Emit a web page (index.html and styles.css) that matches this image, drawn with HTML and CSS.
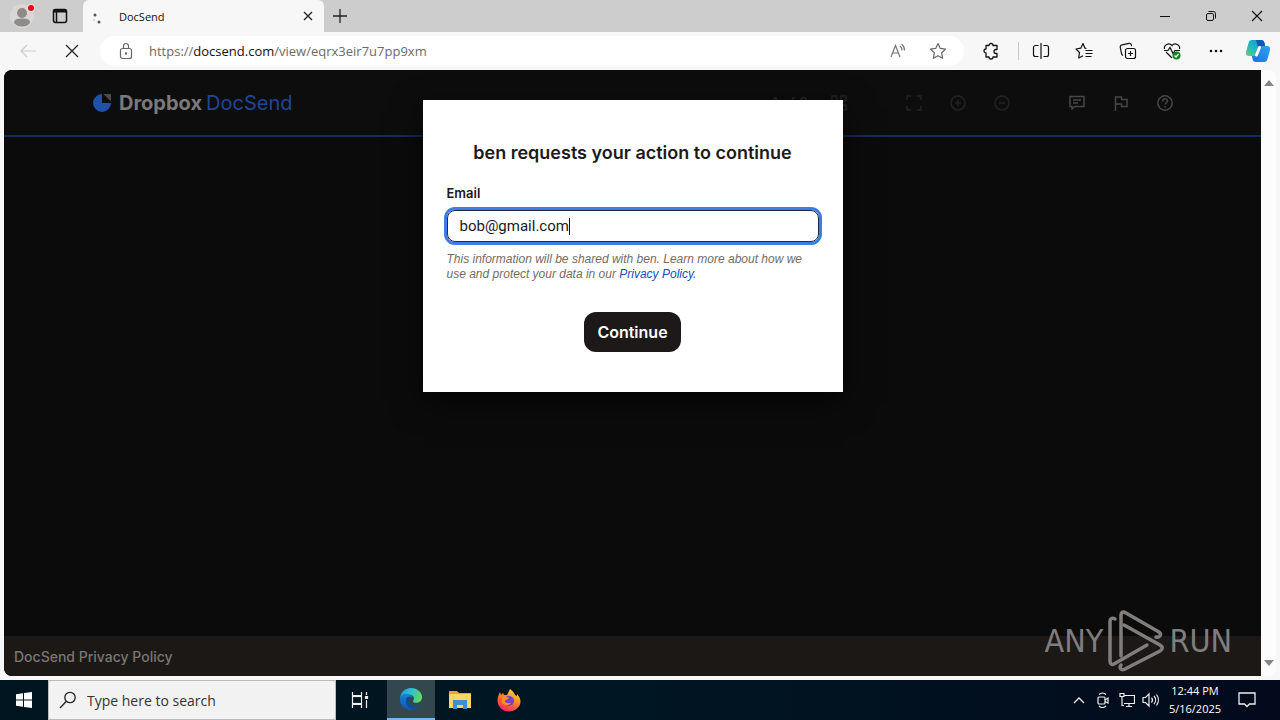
FILE: index.html
```html
<!DOCTYPE html>
<html lang="en">
<head>
    <meta charset="UTF-8">
    <meta name="viewport" content="width=device-width, initial-scale=1.0">
    <title>DocSend</title>
    <link rel="stylesheet" href="styles.css">
</head>
<body>

    <!-- Tab strip -->
    <div class="tabstrip">
        <button class="profile" aria-label="Profile">
            <svg width="32" height="32" viewBox="0 0 32 32"><circle cx="16" cy="16" r="12" fill="#d9d7d5"/><circle cx="16" cy="13" r="5" fill="#8f8b88"/><path d="M8 23c0-4 4-4.500 8-4.500s8 .5 8 4.500c-2 2.500-4.500 3.500-8 3.500S10 25.500 8 23z" fill="#8f8b88"/><circle cx="25" cy="8" r="4" fill="#f3dcdc"/><circle cx="25" cy="8" r="3" fill="#e00b1c"/></svg>
        </button>
        <button class="tab-menu" aria-label="Tab actions">
            <svg width="16" height="16" viewBox="0 0 16 16" fill="none" stroke="#111" stroke-width="1.500"><rect x="1.500" y="1.500" width="13" height="13" rx="2"/><path d="M1.500 3h13" stroke-width="3"/><path d="M4.500 3v11"/></svg>
        </button>
        <div class="tab">
            <svg width="16" height="16" viewBox="0 0 16 16" fill="#555"><circle cx="4" cy="7" r="1.500"/><circle cx="8" cy="14" r="1.500"/><circle cx="3" cy="12" r=".5"/></svg>
            <span class="tab-title">DocSend</span>
            <button aria-label="Close tab">
                <svg width="10" height="10" viewBox="0 0 10 10" stroke="#222" stroke-width="1.300"><path d="M1 1l8 8M9 1l-8 8"/></svg>
            </button>
        </div>
        <button class="new-tab" aria-label="New tab">
            <svg width="14" height="14" viewBox="0 0 14 14" stroke="#222" stroke-width="1.300"><path d="M7 0v14M0 7h14"/></svg>
        </button>
        <div class="window-buttons">
            <button aria-label="Minimize"><svg width="12" height="12" viewBox="0 0 12 12" stroke="#111"><path d="M1 6.500h10"/></svg></button>
            <button aria-label="Restore"><svg width="12" height="12" viewBox="0 0 12 12" fill="none" stroke="#111"><rect x="1.500" y="3.500" width="7" height="7" rx="1.500"/><path d="M3.500 1.500h5a2 2 0 0 1 2 2v5"/></svg></button>
            <button aria-label="Close"><svg width="12" height="12" viewBox="0 0 12 12" stroke="#111" stroke-width="1.200"><path d="M1 1l10 10M11 1L1 11"/></svg></button>
        </div>
    </div>

    <!-- Toolbar -->
    <div class="toolbar">
        <button class="nav" aria-label="Back"><svg width="18" height="18" viewBox="0 0 18 18" fill="none" stroke="#ccc" stroke-width="1.200"><path d="M17 9H2M8 3L2 9l6 6"/></svg></button>
        <button class="nav" aria-label="Stop"><svg width="14" height="14" viewBox="0 0 14 14" stroke="#222" stroke-width="1.200"><path d="M1 1l12 12M13 1L1 13"/></svg></button>
        <div class="address">
            <svg width="16" height="18" viewBox="0 0 16 18" fill="none" stroke="#666" stroke-width="1.200"><rect x="2.500" y="6.500" width="11" height="10" rx="2"/><path d="M5.500 6.500V4a2.500 2.500 0 0 1 5 0v2.500"/><circle cx="8" cy="11.500" r=".6" fill="#666"/></svg>
            <a class="url" href="#">https://<b>docsend.com</b>/view/eqrx3eir7u7pp9xm</a>
            <button aria-label="Read aloud"><svg width="18" height="18" viewBox="0 0 18 18" fill="none" stroke="#777" stroke-width="1.200"><path d="M2 15L6.500 3.500 11 15M3.500 11h6M11 4a6 6 0 0 1 2 4.500M12.500 2a8 8 0 0 1 3 6.500"/></svg></button>
            <button aria-label="Favorite"><svg width="18" height="18" viewBox="0 0 18 18" fill="none" stroke="#666" stroke-width="1.200" stroke-linejoin="round"><path d="M9 1.500l2.300 4.900 5.200.7-3.800 3.700.9 5.400L9 13.700l-4.600 2.500.9-5.400L1.500 7.100l5.200-.7z"/></svg></button>
        </div>
        <div class="tools">
            <button aria-label="Extensions"><svg width="18" height="18" viewBox="0 0 18 18" fill="none" stroke="#111" stroke-width="1.300" stroke-linejoin="round"><path d="M4 3.500h3a2 2 0 0 1 4 0h4v4h-1a1.800 1.800 0 0 0 0 4h1v3.500h-4a2 2 0 0 1-4 0H4v-4a2 2 0 0 1 0-4z"/></svg></button>
            <button class="split" aria-label="Split screen"><svg width="18" height="18" viewBox="0 0 18 18" fill="none" stroke="#111" stroke-width="1.200"><path d="M9 1v16M6.500 3.500H3.500a2 2 0 0 0-2 2v7a2 2 0 0 0 2 2h3M11.500 3.500h3a2 2 0 0 1 2 2v7a2 2 0 0 1-2 2h-3"/></svg></button>
            <button aria-label="Favorites"><svg width="18" height="18" viewBox="0 0 18 18" fill="none" stroke="#111" stroke-width="1.200" stroke-linejoin="round"><path d="M11.500 6.500L10 6.200 8 1.500 5.800 6.200 1 7l3.500 3.500-.8 5.500L8 13.800M10.500 8.500h7M10.500 11.500h7M10.500 14.500h6"/></svg></button>
            <button aria-label="Collections"><svg width="18" height="18" viewBox="0 0 18 18" fill="none" stroke="#111" stroke-width="1.200"><rect x="6.500" y="6.500" width="10" height="10" rx="2"/><path d="M11.500 9v5M9 11.500h5M4 13.500a3 3 0 0 1-1.500-2.200L1.200 5A2 2 0 0 1 3 2.800l7-1.500a2 2 0 0 1 2.300 1.500l.3 1.400"/></svg></button>
            <button aria-label="Browser essentials"><svg width="18" height="18" viewBox="0 0 18 18" fill="none" stroke="#111" stroke-width="1.200"><path d="M1.500 7C.5 3 6 0 9 3.500 12 0 17.500 3 16.500 7M3 10l6 6M1 8.500h4l2-3 3 6 2-3h5"/><circle cx="13.500" cy="13.500" r="4" fill="#168321" stroke="none"/><path d="M11.500 13.500l1.500 1.500 2.500-3" stroke="#fff"/></svg></button>
            <button aria-label="Settings"><svg width="18" height="18" viewBox="0 0 18 18" fill="#111"><circle cx="4" cy="9" r="1.300"/><circle cx="9" cy="9" r="1.300"/><circle cx="14" cy="9" r="1.300"/></svg></button>
            <button aria-label="Copilot">
                <svg width="26" height="24" viewBox="0 0 26 24">
                    <defs>
                        <linearGradient id="cpA" x1="0" y1="1" x2="1" y2="0"><stop offset="0" stop-color="#5fd27c"/><stop offset=".5" stop-color="#1db5c4"/><stop offset="1" stop-color="#1583d8"/></linearGradient>
                        <linearGradient id="cpB" x1="0" y1="1" x2="1" y2="0"><stop offset="0" stop-color="#1b6fe6"/><stop offset="1" stop-color="#2aa5f0"/></linearGradient>
                    </defs>
                    <path d="M7 1h9c2 0 3 1 3.500 3l.5 3h-3c-2 0-3 1-3.500 2.500L11.500 15c-.5 1.500-1.500 2-3 2H4c-2.500 0-3.500-1.500-3-4L3.500 4C4 2 5 1 7 1z" fill="url(#cpA)"/>
                    <path d="M19 23h-8c-2 0-3-1-3.500-3L7 17h2c2 0 3-1 3.500-2.500L14.500 9c.5-1.500 1.500-2 3-2H22c2.500 0 3.500 1.500 3 4l-2.500 9c-.5 2-1.500 3-3.500 3z" fill="url(#cpB)"/>
                    <path d="M11 1h5c2 0 3 1 3.500 3l.5 3h-3c-2 0-3 1-3.500 2.500z" fill="#1557b0"/>
                    <path d="M14.500 8.500l-3 7.500" stroke="#f7f7f7" stroke-width="3" stroke-linecap="round"/>
                </svg>
            </button>
        </div>
    </div>

    <!-- Page -->
    <div class="viewport">
        <div class="page">
            <header class="viewer-header">
                <a class="logo" href="#">
                    <svg width="18" height="20" viewBox="0 0 18 20"><path d="M9 1a9 9 0 1 0 9 9H9z" fill="#1f51ab"/><path d="M10.500 1H18v7.500z" fill="#4c4a48"/></svg>
                    <b>Dropbox</b> <span>DocSend</span>
                </a>
                <div class="viewer-tools">
                    <span class="page-count">1 of 8</span>
                    <button class="grid-button" aria-label="Thumbnails"><svg width="18" height="18" viewBox="0 0 18 18" fill="none" stroke="#232323" stroke-width="1.500"><rect x="2" y="2" width="5" height="5"/><rect x="11" y="2" width="5" height="5"/><rect x="2" y="11" width="5" height="5"/><rect x="11" y="11" width="5" height="5"/></svg></button>
                    <div class="tool-group">
                        <button aria-label="Full screen"><svg width="18" height="18" viewBox="0 0 18 18" fill="none" stroke="#232323" stroke-width="1.500"><path d="M2 6V2h4M12 2h4v4M16 12v4h-4M6 16H2v-4"/></svg></button>
                        <button aria-label="Zoom in"><svg width="18" height="18" viewBox="0 0 18 18" fill="none" stroke="#232323" stroke-width="1.500"><circle cx="9" cy="9" r="7"/><path d="M9 6v6M6 9h6"/></svg></button>
                        <button aria-label="Zoom out"><svg width="18" height="18" viewBox="0 0 18 18" fill="none" stroke="#232323" stroke-width="1.500"><circle cx="9" cy="9" r="7"/><path d="M6 9h6"/></svg></button>
                    </div>
                    <div class="tool-group">
                        <button aria-label="Comment"><svg width="18" height="18" viewBox="0 0 18 18" fill="none" stroke="#474747" stroke-width="1.500"><path d="M2 2.500h14v10H7L4 15v-2.500H2zM5 6h8M5 9h5"/></svg></button>
                        <button aria-label="Report"><svg width="18" height="18" viewBox="0 0 18 18" fill="none" stroke="#474747" stroke-width="1.500"><path d="M3.500 17V3h6v2.500H15v7H9.500V10h-6"/></svg></button>
                        <button aria-label="Help"><svg width="18" height="18" viewBox="0 0 18 18" fill="none" stroke="#474747" stroke-width="1.500"><circle cx="9" cy="9" r="7.200"/><path d="M6.500 7.500C6.500 4 11.500 4 11.500 7c0 1.800-2.500 1.800-2.500 3.500M9 12v1.500"/></svg></button>
                    </div>
                </div>
            </header>
            <main class="viewer-body"></main>
            <footer class="viewer-footer">
                <a href="#">DocSend Privacy Policy</a>
            </footer>

            <form class="modal">
                <h1>ben requests your action to continue</h1>
                <label for="email">Email</label>
                <div class="field">
                    <input type="text" id="email" value="bob@gmail.com">
                    <span class="caret"></span>
                </div>
                <p>This information will be shared with ben. Learn more about how we use and protect your data in our <a href="#">Privacy Policy.</a></p>
                <button type="button">Continue</button>
            </form>
        </div>
        <div class="scrollbar">
            <svg width="10" height="6" viewBox="0 0 10 6" fill="#858585"><path d="M5 0l5 6H0z"/></svg>
            <svg width="10" height="6" viewBox="0 0 10 6" fill="#858585"><path d="M0 0h10L5 6z"/></svg>
        </div>
        <div class="watermark">
            <span>ANY</span>
            <svg width="58" height="62" viewBox="0 0 58 62" fill="none" stroke="#807e7d" stroke-width="3.500" stroke-linejoin="round" stroke-linecap="round"><path d="M8 9C5 7 3 9 3 11v40c0 3 2 4 4 3l33-19"/><path d="M17 15l36 20c3 2 3 4 0 6L18 59c-4 2-6-1-4-4"/><path d="M49 27c4 1 6-3 3-5L19 3c-3-2-5-1-5 2v41"/></svg>
            <span>RUN</span>
        </div>
    </div>

    <!-- Taskbar -->
    <div class="taskbar">
        <button class="start" aria-label="Start"><svg width="16" height="16" viewBox="0 0 16 16" fill="#fff"><path d="M0 2.200L7 1.200v6.300H0zM8 1l8-1v7.500H8zM0 8.500h7v6.300l-7-1zM8 8.500h8V16l-8-1z"/></svg></button>
        <label class="search">
            <svg width="18" height="18" viewBox="0 0 18 18" fill="none" stroke="#222" stroke-width="1.300"><circle cx="11" cy="6.500" r="5.200"/><path d="M7.300 10.300L1 17"/></svg>
            <input type="text" placeholder="Type here to search" aria-label="Search">
        </label>
        <div class="apps">
            <button aria-label="Task view"><svg width="18" height="18" viewBox="0 0 18 18" fill="none" stroke="#eee" stroke-width="1.200"><path d="M1.500 1v3.500h9V1M1.500 17v-3.500h9V17"/><rect x="1.500" y="5.500" width="9" height="7"/><path d="M15.500 1v3M15.500 9v8"/><path d="M14.500 5.500h2v2h-2z" fill="#eee"/></svg></button>
            <button class="active" aria-label="Microsoft Edge">
                <svg width="24" height="24" viewBox="0 0 26 26">
                    <defs>
                        <linearGradient id="edA" x1="0" y1=".3" x2="1" y2=".5"><stop offset="0" stop-color="#1f9fe0"/><stop offset=".5" stop-color="#2ec3cf"/><stop offset="1" stop-color="#65d957"/></linearGradient>
                        <linearGradient id="edB" x1="0" y1="0" x2="0" y2="1"><stop offset="0" stop-color="#1683d0"/><stop offset="1" stop-color="#1155b4"/></linearGradient>
                    </defs>
                    <path d="M1 12C2 5 7 1 13 1c7 0 12 5 12 10 0 4-3 6-6.500 6-2.500 0-4-1-3-2.500 2-3-.5-6-4.500-6C6 8.500 2 10 1 12z" fill="url(#edA)"/>
                    <path d="M1 13c0-4 4-6 8-5.500 3 .3 5 2 5.500 3.500-4 0-5 3-4.500 5.500C10.500 20 14 22 18 21.500c2 0 4-1 5-2-2 3.500-6 5.500-10 5.500C6 25 1 20 1 13z" fill="url(#edB)"/>
                    <path d="M8 12c-2 5 1 11 7 12.500 4-.5 6.500-2.500 8-5-3 2-8 2-10.500-.5-3-3-2-7 1-8-2-1-4.500-.5-5.500 1z" fill="#154a93"/>
                </svg>
            </button>
            <button aria-label="File Explorer"><svg width="22" height="20" viewBox="0 0 22 20"><path d="M0 1h8l2 2h12v15H0z" fill="#e8a33a"/><path d="M0 4h22v14H0z" fill="#fbd667"/><path d="M4 10h14v9h-4v-4H8v4H4z" fill="#3d8fd1"/></svg></button>
            <button aria-label="Firefox">
                <svg width="24" height="24" viewBox="0 0 24 24">
                    <defs><linearGradient id="ffA" x1=".8" y1="0" x2=".3" y2="1"><stop offset="0" stop-color="#ffe04a"/><stop offset=".45" stop-color="#ff8a1f"/><stop offset="1" stop-color="#f5226a"/></linearGradient></defs>
                    <path d="M3 4l1 3 2-2 1 2h3l3-6c2 1 3 3 4 4l1 2 2 1V6c2 2 3.500 5 3.500 7.500C23.500 19 18 23.500 12 23.500S.5 19 .5 12.500C.5 9 2 6 3 4z" fill="url(#ffA)"/>
                    <circle cx="12" cy="13" r="5" fill="#7a3fc9"/>
                    <path d="M5 9c3-1 5 0 7 1-1 2-4 1.500-4 3.500 1 2 4 2 6 1-1 3-7 4-9 0z" fill="#ff8e22"/>
                </svg>
            </button>
        </div>
        <div class="tray">
            <button aria-label="Hidden icons"><svg width="12" height="8" viewBox="0 0 12 8" fill="none" stroke="#eee" stroke-width="1.300"><path d="M1 7l5-5 5 5"/></svg></button>
            <button aria-label="Camera"><svg width="12" height="16" viewBox="0 0 12 16" fill="none" stroke="#eee" stroke-width="1.200"><rect x="1" y="5" width="7" height="7" rx="1"/><path d="M8 8l3-2v5L8 9.500M2 2.500c2-2 5-2 7 0M2 14c2 2 5 2 7 0"/></svg></button>
            <button aria-label="Network"><svg width="16" height="16" viewBox="0 0 16 16" fill="none" stroke="#eee" stroke-width="1.200"><path d="M5 3.500h10.500v8H5M7 14.500h6M10 11.500v3M1 1.500h4v3H1zM3 4.500v9h2"/></svg></button>
            <button aria-label="Volume"><svg width="18" height="16" viewBox="0 0 18 16" fill="none" stroke="#eee" stroke-width="1.200"><path d="M1 5.500h2.500L7 2v12L3.500 10.500H1zM9.500 5.500a4 4 0 0 1 0 5M12 4a6 6 0 0 1 0 8M14.500 2.500a9 9 0 0 1 0 11"/></svg></button>
            <div class="clock"><span>12:44 PM</span><span>5/16/2025</span></div>
            <button aria-label="Notifications"><svg width="18" height="18" viewBox="0 0 18 18" fill="none" stroke="#eee" stroke-width="1.300"><path d="M1 2h16v11h-5.500L9 15.500 6.500 13H1z"/></svg></button>
        </div>
    </div>

</body>
</html>
```

FILE: styles.css
```css
* {
    box-sizing: border-box;
}
body {
    margin: 0;
    height: 100vh;
    display: flex;
    flex-direction: column;
    background-color: #f7f7f7;
    font-family: "Open Sans", "Noto Sans", sans-serif;
    font-size: 12px;
    color: #1e1919;
    overflow: hidden;
}
button {
    display: flex;
    align-items: center;
    justify-content: center;
    padding: 0;
    border: none;
    background: none;
    font-family: inherit;
}
a {
    text-decoration: none;
}
svg {
    display: block;
    flex: none;
}

/* tab strip */
.tabstrip {
    display: flex;
    height: 32px;
    background-color: #cdcdcd;
}
.profile {
    width: 38px;
    padding-left: 6px;
}
.tab-menu {
    width: 44px;
}
.tab {
    display: flex;
    align-items: center;
    width: 241px;
    margin-left: 1px;
    padding: 0 11px 0 8px;
    background-color: #f7f7f7;
    border-radius: 6px 6px 0 0;
}
.tab-title {
    flex: 1;
    margin-left: 12px;
    font-size: 11px;
    color: #111;
}
.new-tab {
    width: 32px;
}
.window-buttons {
    display: flex;
    margin-left: auto;
}
.window-buttons button {
    width: 46px;
}

/* toolbar */
.toolbar {
    display: flex;
    align-items: center;
    height: 38px;
    padding: 0 2px 0 6px;
}
.nav {
    width: 44px;
}
.address {
    flex: 1;
    display: flex;
    align-items: center;
    height: 30px;
    margin-left: 6px;
    padding: 0 17px 0 18px;
    background-color: #fff;
    border-radius: 15px;
}
.url {
    flex: 1;
    margin-left: 15px;
    font-size: 13px;
    color: #6b6b6b;
}
.url b {
    font-weight: normal;
    color: #111;
}
.address button {
    margin-left: 22px;
}
.tools {
    display: flex;
    align-items: center;
}
.tools button {
    width: 44px;
    height: 18px;
}
.tools button:first-child {
    width: 54px;
}
.tools button.split {
    border-left: 1px solid #c8c8c8;
}
.tools button:last-child {
    width: 40px;
}

/* page */
.viewport {
    flex: 1;
    display: flex;
    position: relative;
    margin: 0 4px 4px;
    background-color: #fcfcfc;
    border-radius: 8px;
    overflow: hidden;
}
.page {
    flex: 1;
    display: flex;
    flex-direction: column;
    position: relative;
    background-color: #0b0b0b;
    font-family: Inter, "Liberation Sans", sans-serif;
}
.viewer-header {
    display: flex;
    align-items: center;
    justify-content: space-between;
    height: 67px;
    padding: 0 87px 0 89px;
    background-color: #0d0d0d;
    border-bottom: 2px solid #132c59;
}
.logo {
    display: flex;
    align-items: center;
    font-size: 20px;
    color: #1f4796;
}
.logo b {
    margin: 0 4px 0 8px;
    color: #7c7a79;
}
.viewer-tools {
    display: flex;
    align-items: center;
}
.page-count {
    font-size: 14px;
    color: #2b2b2b;
}
.grid-button {
    margin: 0 57px 0 22px;
}
.tool-group {
    display: flex;
    gap: 26px;
}
.tool-group + .tool-group {
    margin-left: 57px;
}
.viewer-body {
    flex: 1;
}
.viewer-footer {
    display: flex;
    align-items: center;
    height: 40px;
    padding: 0 10px;
    background-color: #1c1816;
    font-size: 14px;
    font-weight: 500;
}
.viewer-footer a {
    color: #7b7673;
}
.scrollbar {
    width: 15px;
    display: flex;
    flex-direction: column;
    align-items: center;
    justify-content: space-between;
    padding: 10px 0;
}

/* email dialog */
.modal {
    position: absolute;
    top: 30px;
    left: 50%;
    width: 420px;
    margin-left: -210px;
    padding: 41px 24px 40px;
    background-color: #fff;
    box-shadow: 0 10px 30px rgba(0, 0, 0, 0.6);
}
.modal h1 {
    margin: 0 0 20px;
    font-size: 18px;
    line-height: 24px;
    font-weight: 600;
    text-align: center;
}
.modal label {
    display: block;
    margin-bottom: 9px;
    font-size: 13px;
    line-height: 16px;
    font-weight: 600;
}
.field {
    display: flex;
    align-items: center;
    height: 32px;
    padding: 0 12px;
    border: 1px solid #1e2a45;
    border-radius: 8px;
    box-shadow: 0 0 0 3px #3b7de0;
}
.field input {
    field-sizing: content;
    padding: 0;
    border: none;
    outline: none;
    background: none;
    font-family: Roboto, sans-serif;
    font-size: 15px;
    color: #1e1919;
}
.caret {
    width: 1px;
    height: 17px;
    background-color: #111;
}
.modal p {
    margin: 10px 0 30px;
    font-family: "Liberation Sans", sans-serif;
    font-size: 12px;
    line-height: 15px;
    font-style: italic;
    color: #736c64;
}
.modal p a {
    color: #0f50c0;
}
.modal button {
    height: 40px;
    margin: 0 auto;
    padding: 0 13px;
    background-color: #1e1919;
    border-radius: 12px;
    font-size: 16px;
    font-weight: 600;
    color: #fff;
}

/* watermark over the page corner */
.watermark {
    position: absolute;
    right: 44px;
    bottom: 4px;
    display: flex;
    align-items: center;
    gap: 4px;
    font-family: "DejaVu Sans Condensed", sans-serif;
    font-size: 32px;
    color: #807e7d;
}

/* taskbar */
.taskbar {
    display: flex;
    height: 40px;
    background: linear-gradient(90deg, #00151f, #001622 50%, #020a1c);
    color: #fff;
}
.start {
    width: 48px;
}
.search {
    display: flex;
    align-items: center;
    width: 288px;
    padding-left: 10px;
    background-color: #f2f2f2;
    border: 1px solid #bbb;
}
.search input {
    flex: 1;
    min-width: 0;
    margin-left: 10px;
    padding: 0;
    border: none;
    background: none;
    font-family: inherit;
    font-size: 14px;
}
.search input::placeholder {
    color: #333;
}
.apps {
    display: flex;
    gap: 1px;
}
.apps button {
    width: 48px;
}
.apps .active {
    margin-left: 2px;
    background-color: #33474f;
    border-bottom: 2px solid #76b9ed;
}
.tray {
    display: flex;
    margin-left: auto;
    padding-right: 13px;
}
.tray button {
    width: 24px;
}
.clock {
    display: flex;
    flex-direction: column;
    justify-content: center;
    width: 64px;
    text-align: center;
    font-size: 11px;
    line-height: 18px;
}
.tray .clock + button {
    width: 40px;
}
```
